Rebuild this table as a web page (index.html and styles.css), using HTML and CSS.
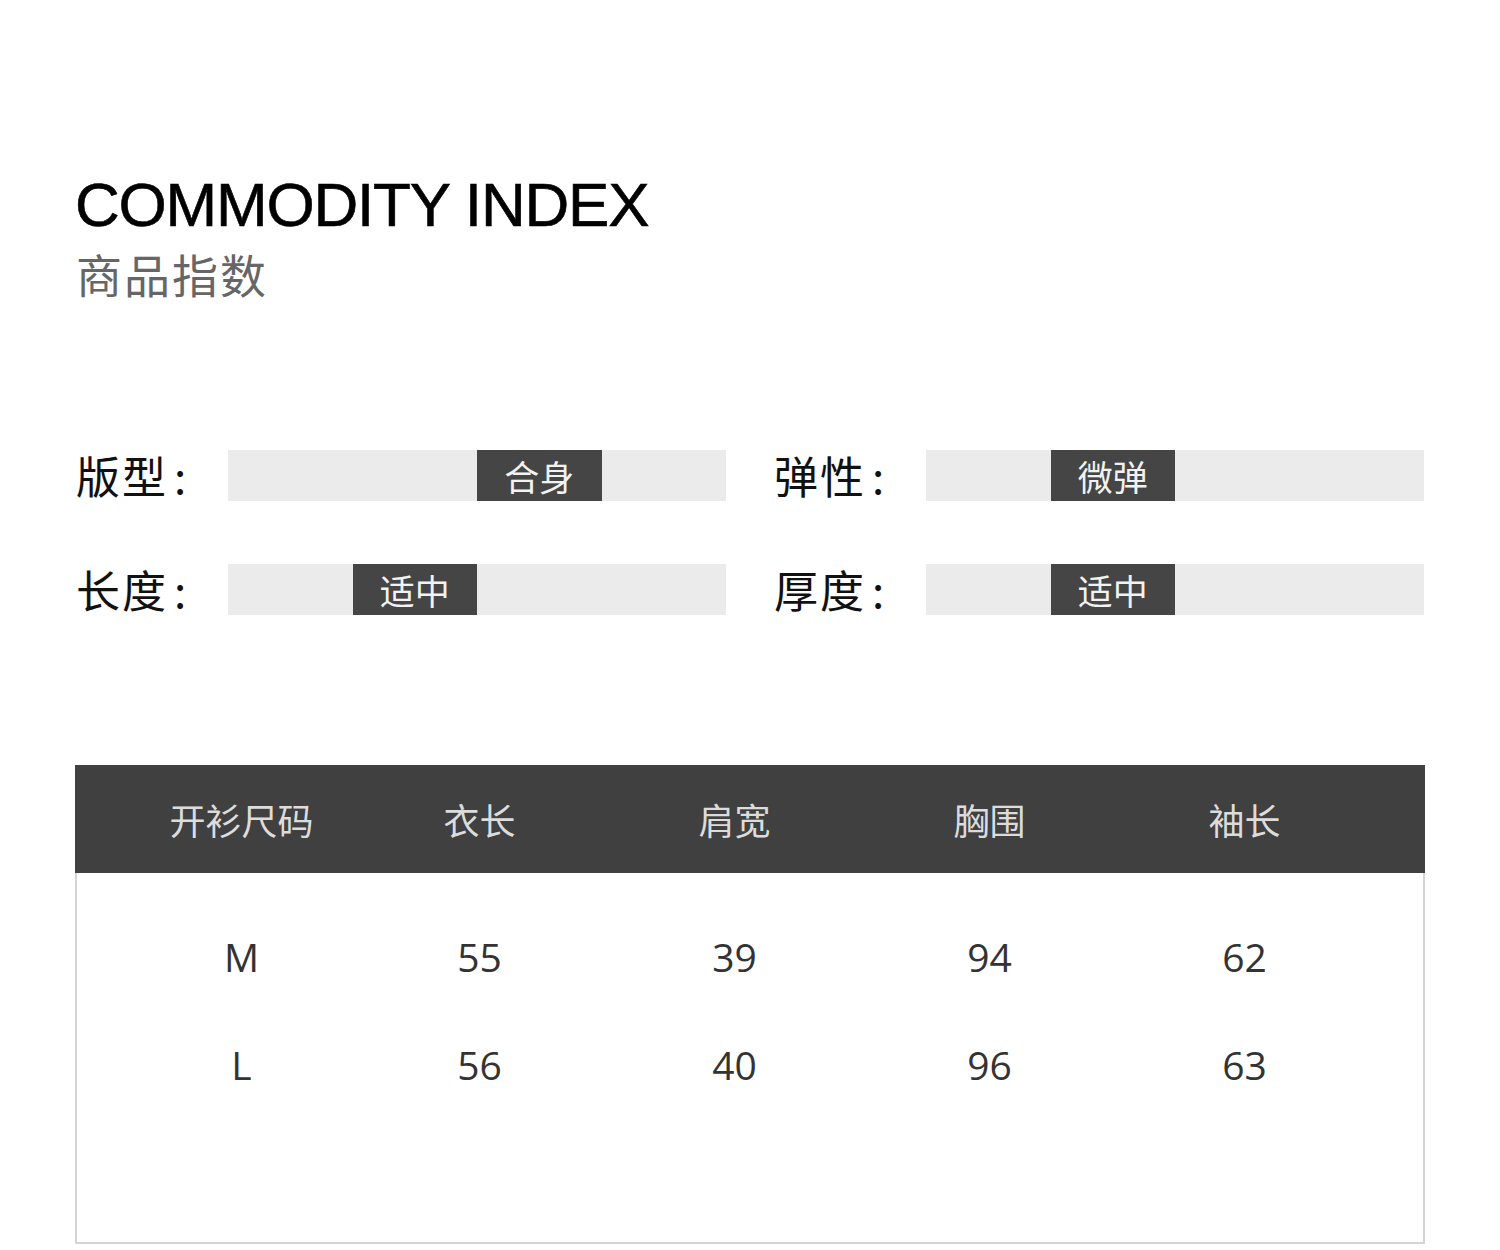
FILE: index.html
```html
<!DOCTYPE html>
<html lang="zh-CN">
<head>
<meta charset="utf-8">
<title>COMMODITY INDEX 商品指数</title>
<link rel="stylesheet" href="styles.css">
</head>
<body>
<div class="page">
  <header class="title">
    <h1 class="title-en">COMMODITY INDEX</h1>
    <p class="title-cn">商品指数</p>
  </header>

  <section class="attrs">
    <div class="attr">
      <span class="attr-label">版型<span class="colon">:</span></span>
      <div class="scale"><span class="slot"></span><span class="slot"></span><span class="slot on">合身</span><span class="slot"></span></div>
    </div>
    <div class="attr">
      <span class="attr-label">弹性<span class="colon">:</span></span>
      <div class="scale"><span class="slot"></span><span class="slot on">微弹</span><span class="slot"></span><span class="slot"></span></div>
    </div>
    <div class="attr">
      <span class="attr-label">长度<span class="colon">:</span></span>
      <div class="scale"><span class="slot"></span><span class="slot on">适中</span><span class="slot"></span><span class="slot"></span></div>
    </div>
    <div class="attr">
      <span class="attr-label">厚度<span class="colon">:</span></span>
      <div class="scale"><span class="slot"></span><span class="slot on">适中</span><span class="slot"></span><span class="slot"></span></div>
    </div>
  </section>

  <section class="size-table">
    <div class="row head">
      <span>开衫尺码</span><span>衣长</span><span>肩宽</span><span>胸围</span><span>袖长</span>
    </div>
    <div class="body">
      <div class="row">
        <span>M</span><span>55</span><span>39</span><span>94</span><span>62</span>
      </div>
      <div class="row">
        <span>L</span><span>56</span><span>40</span><span>96</span><span>63</span>
      </div>
    </div>
  </section>
</div>
</body>
</html>
```

FILE: styles.css
```css
* { box-sizing: border-box; }

html, body {
  margin: 0;
  padding: 0;
  background: #ffffff;
}

body {
  font-family: "Noto Sans CJK SC", "Noto Sans", sans-serif;
  color: #111;
}

.page {
  width: 1500px;
  padding: 174px 75px 0 75px;
}

.title-en {
  margin: 0;
  font-family: "Liberation Sans", Arial, sans-serif;
  font-weight: 400;
  font-size: 62px;
  line-height: 62px;
  letter-spacing: -1.2px;
  color: #000;
  -webkit-text-stroke: 0.6px #000;
}

.title-cn {
  margin: 14px 0 0 0;
  padding-left: 1px;
  font-size: 46px;
  line-height: 46px;
  color: #666;
  letter-spacing: 2px;
}

.attrs {
  margin-top: 154px;
  display: grid;
  grid-template-columns: 650px 650px;
  column-gap: 48px;
  row-gap: 63px;
  padding-left: 1px;
}

.attr {
  display: flex;
  align-items: center;
}

.attr-label {
  width: 152px;
  flex: none;
  font-size: 44px;
  line-height: 51px;
  letter-spacing: 2px;
  color: #111;
}

.colon {
  padding-left: 6px;
}

.scale {
  width: 498px;
  height: 51px;
  background: #ebebeb;
  display: grid;
  grid-template-columns: repeat(4, 1fr);
}

.slot {
  display: flex;
  align-items: center;
  justify-content: center;
  font-size: 35px;
  color: #f2f2f2;
}

.slot.on {
  background: #454545;
}

.size-table {
  margin-top: 150px;
  width: 1350px;
}

.row {
  display: grid;
  grid-template-columns: 221px repeat(4, 255px);
  padding-left: 56px;
  align-items: center;
}

.row span {
  text-align: center;
}

.head {
  height: 108px;
  background: #404040;
  color: #dcdcdc;
  font-size: 36px;
}

.body {
  height: 371px;
  border: 2px solid #d4d4d4;
  border-top: none;
  padding-top: 29px;
}

.body .row {
  height: 108px;
  padding-left: 54px;
  font-family: "Open Sans", "Noto Sans", sans-serif;
  font-size: 39px;
  color: #333;
}
```
